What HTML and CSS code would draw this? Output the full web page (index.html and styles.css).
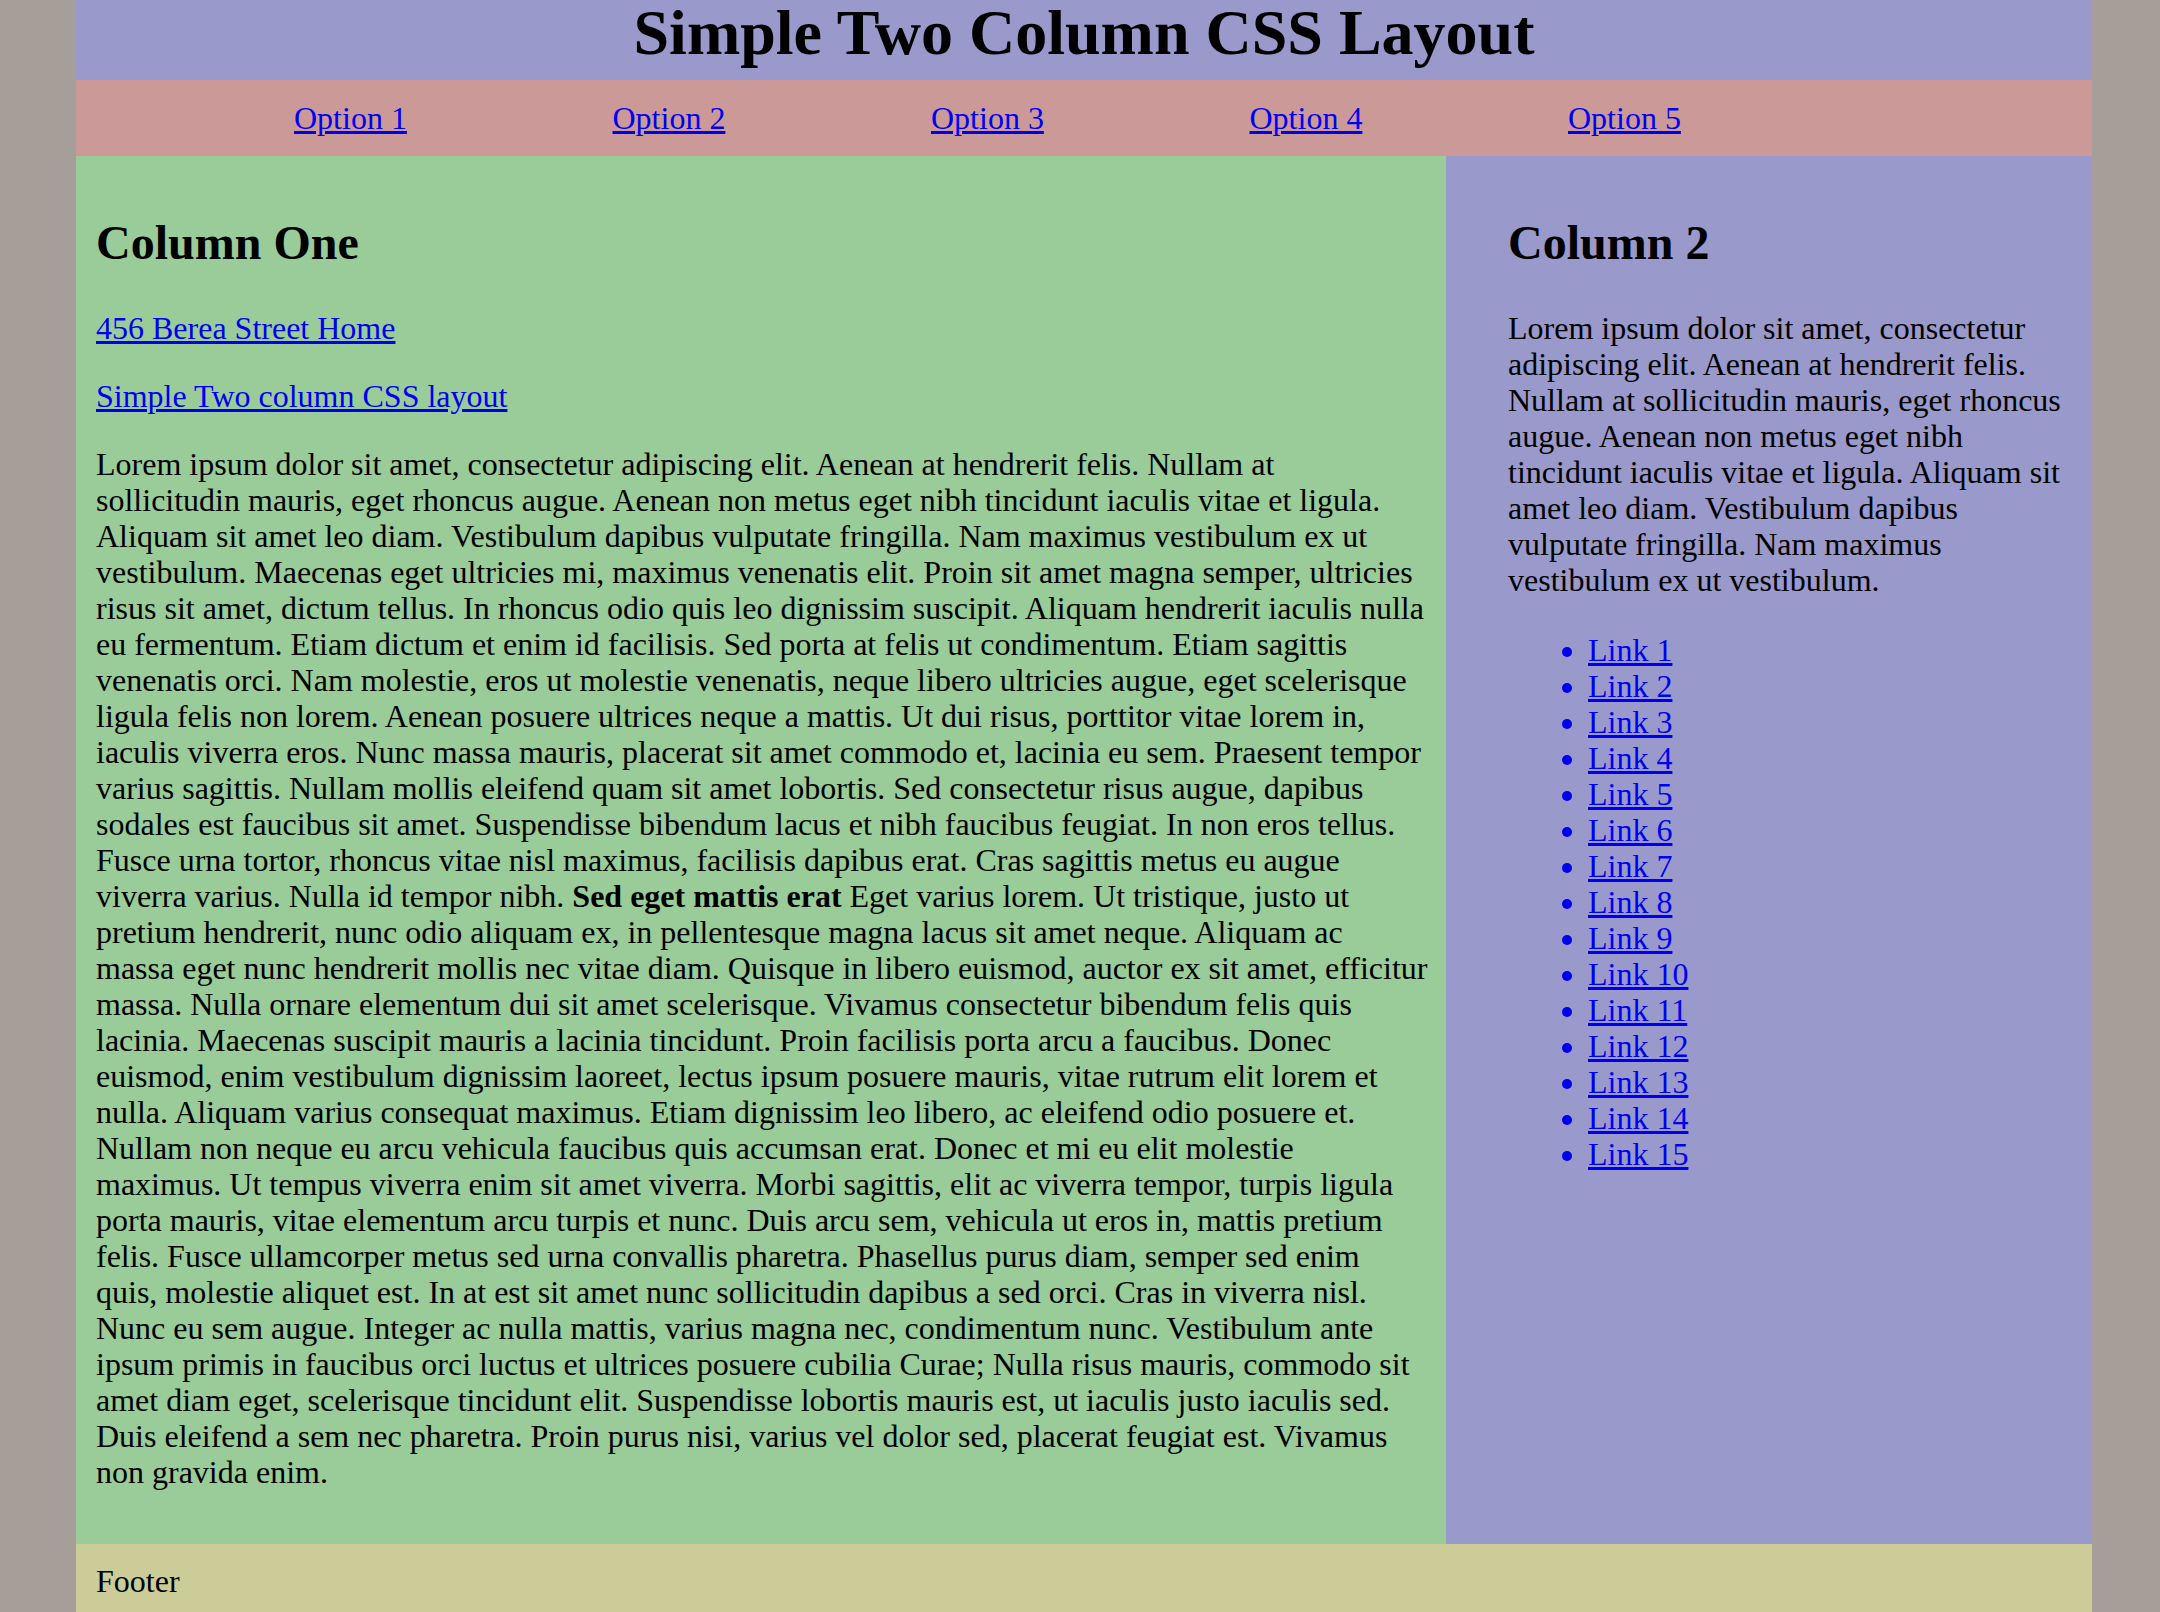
FILE: index.html
```html
<!DOCTYPE html>
<html lang="en">
<head>
<meta charset="utf-8">
<title>Simple Two Column CSS Layout</title>
<link rel="stylesheet" href="styles.css">
</head>
<body>
<div class="wrap">
  <header class="header">
    <h1 class="title">Simple Two Column CSS Layout</h1>
  </header>
  <nav class="nav">
    <ul class="nav-list">
      <li class="nav-item"><a href="#">Option 1</a></li>
      <li class="nav-item"><a href="#">Option 2</a></li>
      <li class="nav-item"><a href="#">Option 3</a></li>
      <li class="nav-item"><a href="#">Option 4</a></li>
      <li class="nav-item"><a href="#">Option 5</a></li>
    </ul>
  </nav>
  <div class="columns">
    <main class="main">
      <h2 class="heading">Column One</h2>
      <p class="text"><a href="#">456 Berea Street Home</a></p>
      <p class="text"><a href="#">Simple Two column CSS layout</a></p>
      <p class="text">Lorem ipsum dolor sit amet, consectetur adipiscing elit. Aenean at hendrerit felis. Nullam at<br>
sollicitudin mauris, eget rhoncus augue. Aenean non metus eget nibh tincidunt iaculis vitae et ligula.<br>
Aliquam sit amet leo diam. Vestibulum dapibus vulputate fringilla. Nam maximus vestibulum ex ut<br>
vestibulum. Maecenas eget ultricies mi, maximus venenatis elit. Proin sit amet magna semper, ultricies<br>
risus sit amet, dictum tellus. In rhoncus odio quis leo dignissim suscipit. Aliquam hendrerit iaculis nulla<br>
eu fermentum. Etiam dictum et enim id facilisis. Sed porta at felis ut condimentum. Etiam sagittis<br>
venenatis orci. Nam molestie, eros ut molestie venenatis, neque libero ultricies augue, eget scelerisque<br>
ligula felis non lorem. Aenean posuere ultrices neque a mattis. Ut dui risus, porttitor vitae lorem in,<br>
iaculis viverra eros. Nunc massa mauris, placerat sit amet commodo et, lacinia eu sem. Praesent tempor<br>
varius sagittis. Nullam mollis eleifend quam sit amet lobortis. Sed consectetur risus augue, dapibus<br>
sodales est faucibus sit amet. Suspendisse bibendum lacus et nibh faucibus feugiat. In non eros tellus.<br>
Fusce urna tortor, rhoncus vitae nisl maximus, facilisis dapibus erat. Cras sagittis metus eu augue<br>
viverra varius. Nulla id tempor nibh. <strong>Sed eget mattis erat</strong> Eget varius lorem. Ut tristique, justo ut<br>
pretium hendrerit, nunc odio aliquam ex, in pellentesque magna lacus sit amet neque. Aliquam ac<br>
massa eget nunc hendrerit mollis nec vitae diam. Quisque in libero euismod, auctor ex sit amet, efficitur<br>
massa. Nulla ornare elementum dui sit amet scelerisque. Vivamus consectetur bibendum felis quis<br>
lacinia. Maecenas suscipit mauris a lacinia tincidunt. Proin facilisis porta arcu a faucibus. Donec<br>
euismod, enim vestibulum dignissim laoreet, lectus ipsum posuere mauris, vitae rutrum elit lorem et<br>
nulla. Aliquam varius consequat maximus. Etiam dignissim leo libero, ac eleifend odio posuere et.<br>
Nullam non neque eu arcu vehicula faucibus quis accumsan erat. Donec et mi eu elit molestie<br>
maximus. Ut tempus viverra enim sit amet viverra. Morbi sagittis, elit ac viverra tempor, turpis ligula<br>
porta mauris, vitae elementum arcu turpis et nunc. Duis arcu sem, vehicula ut eros in, mattis pretium<br>
felis. Fusce ullamcorper metus sed urna convallis pharetra. Phasellus purus diam, semper sed enim<br>
quis, molestie aliquet est. In at est sit amet nunc sollicitudin dapibus a sed orci. Cras in viverra nisl.<br>
Nunc eu sem augue. Integer ac nulla mattis, varius magna nec, condimentum nunc. Vestibulum ante<br>
ipsum primis in faucibus orci luctus et ultrices posuere cubilia Curae; Nulla risus mauris, commodo sit<br>
amet diam eget, scelerisque tincidunt elit. Suspendisse lobortis mauris est, ut iaculis justo iaculis sed.<br>
Duis eleifend a sem nec pharetra. Proin purus nisi, varius vel dolor sed, placerat feugiat est. Vivamus<br>
non gravida enim.</p>
    </main>
    <aside class="side">
      <h2 class="heading">Column 2</h2>
      <p class="text">Lorem ipsum dolor sit amet, consectetur adipiscing elit. Aenean at hendrerit felis. Nullam at sollicitudin mauris, eget rhoncus augue. Aenean non metus eget nibh tincidunt iaculis vitae et ligula. Aliquam sit amet leo diam. Vestibulum dapibus vulputate fringilla. Nam maximus vestibulum ex ut vestibulum.</p>
      <ul class="links">
        <li><a href="#">Link 1</a></li>
        <li><a href="#">Link 2</a></li>
        <li><a href="#">Link 3</a></li>
        <li><a href="#">Link 4</a></li>
        <li><a href="#">Link 5</a></li>
        <li><a href="#">Link 6</a></li>
        <li><a href="#">Link 7</a></li>
        <li><a href="#">Link 8</a></li>
        <li><a href="#">Link 9</a></li>
        <li><a href="#">Link 10</a></li>
        <li><a href="#">Link 11</a></li>
        <li><a href="#">Link 12</a></li>
        <li><a href="#">Link 13</a></li>
        <li><a href="#">Link 14</a></li>
        <li><a href="#">Link 15</a></li>
      </ul>
    </aside>
  </div>
  <footer class="footer">
    <p class="footer-text">Footer</p>
  </footer>
</div>
</body>
</html>
```

FILE: styles.css
```css
html, body {
  margin: 0;
  padding: 0;
}

body {
  background: #a59e99;
  font-family: "Liberation Serif", "Times New Roman", serif;
  font-size: 32px;
  line-height: 36px;
  color: #000;
}

a {
  color: #0000ee;
  text-decoration: underline;
}

.wrap {
  width: 2016px;
  margin-left: 76px;
}

.header {
  background: #9999cc;
  padding: 0 0 14px;
}

.title {
  margin: 0;
  font-size: 64px;
  line-height: 66px;
  font-weight: bold;
  text-align: center;
}

.nav {
  background: #cc9999;
  padding: 20px 0;
}

.nav-list {
  list-style: none;
  margin: 0;
  padding: 0 0 0 218px;
  display: flex;
}

.nav-item {
  width: 318.5px;
  flex: none;
}

.columns {
  display: flex;
  align-items: stretch;
}

.main {
  background: #99cc99;
  width: 1370px;
  box-sizing: border-box;
  padding: 20px 8px 22px 20px;
  flex: none;
}

.side {
  background: #9999cc;
  width: 646px;
  box-sizing: border-box;
  padding: 20px 20px 22px 62px;
  flex: none;
}

.heading {
  font-size: 48px;
  line-height: 54px;
  font-weight: bold;
  margin: 40px 0;
}

.text {
  margin: 32px 0;
}

.links {
  margin: 34px 0 0;
  padding-left: 80px;
  list-style: disc;
  color: #0000ee;
}

.footer {
  background: #cccc99;
  padding: 19px 20px 20px;
}

.footer-text {
  margin: 0;
}
```
